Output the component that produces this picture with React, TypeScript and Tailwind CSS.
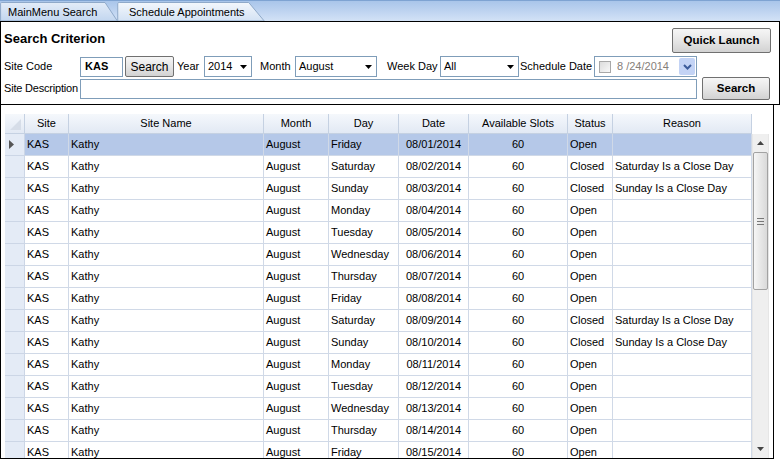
import React from "react";

interface Row {
  date: string;
  day: string;
  status: string;
  reason: string;
}

const days = ["Friday", "Saturday", "Sunday", "Monday", "Tuesday", "Wednesday", "Thursday"];

const rows: Row[] = Array.from({ length: 15 }).map((_, i) => {
  const day = days[i % 7];
  const closed = day === "Saturday" || day === "Sunday";
  return {
    date: `08/${String(i + 1).padStart(2, "0")}/2014`,
    day,
    status: closed ? "Closed" : "Open",
    reason: closed ? `${day} Is a Close Day` : "",
  };
});

const cols = [
  { key: "site", label: "Site", w: "w-[44px]", center: false },
  { key: "name", label: "Site Name", w: "w-[195px]", center: false },
  { key: "month", label: "Month", w: "w-[65px]", center: false },
  { key: "day", label: "Day", w: "w-[70px]", center: false },
  { key: "date", label: "Date", w: "w-[70px]", center: true },
  { key: "slots", label: "Available Slots", w: "w-[99px]", center: true },
  { key: "status", label: "Status", w: "w-[45px]", center: false },
  { key: "reason", label: "Reason", w: "w-[139px]", center: false },
];

function cellValue(key: string, r: Row): string {
  switch (key) {
    case "site":
      return "KAS";
    case "name":
      return "Kathy";
    case "month":
      return "August";
    case "day":
      return r.day;
    case "date":
      return r.date;
    case "slots":
      return "60";
    case "status":
      return r.status;
    default:
      return r.reason;
  }
}

function DownTri() {
  return (
    <svg width="7" height="4" viewBox="0 0 7 4" className="shrink-0">
      <path d="M0 0H7L3.5 4Z" fill="#000" />
    </svg>
  );
}

function Label({ text, cls }: { text: string; cls: string }) {
  return <span className={`shrink-0 whitespace-nowrap ${cls}`}>{text}</span>;
}

function Select({ value, w }: { value: string; w: string }) {
  return (
    <div
      className={`flex h-[21px] shrink-0 ${w} items-center justify-between border border-[#7f9db9] bg-white pl-[3px] pr-[4px]`}
    >
      <span>{value}</span>
      <DownTri />
    </div>
  );
}

function Button({ label, bold, cls }: { label: string; bold?: boolean; cls: string }) {
  return (
    <div
      className={`flex shrink-0 items-center justify-center whitespace-nowrap rounded-[2px] border border-[#707070] bg-gradient-to-b from-[#f6f6f6] via-[#e6e6e6] to-[#d2d2d2] ${
        bold ? "font-bold text-[11.5px]" : ""
      } ${cls}`}
    >
      {label}
    </div>
  );
}

function Tab({ label, selected, cls }: { label: string; selected?: boolean; cls: string }) {
  return (
    <div className={`relative h-[20px] ${cls}`}>
      <svg className="absolute inset-0 h-full w-full" preserveAspectRatio="none" viewBox="0 0 100 20">
        <defs>
          <linearGradient id={selected ? "gs" : "gu"} x1="0" y1="0" x2="0" y2="1">
            <stop offset="0" stopColor={selected ? "#f3f7fc" : "#e3ecf8"} />
            <stop offset="1" stopColor={selected ? "#d3e2f4" : "#c2d6ef"} />
          </linearGradient>
        </defs>
        <path
          d="M0.5 20V2.5Q0.5 1.5 1.5 1.5H89L99.5 20Z"
          fill={`url(#${selected ? "gs" : "gu"})`}
          stroke="#8fa9c9"
          strokeWidth="1"
          vectorEffect="non-scaling-stroke"
        />
      </svg>
      <span className="relative block pt-[4px] leading-[14px]">{label}</span>
    </div>
  );
}

export default function App() {
  return (
    <div
      className="h-[465px] w-[780px] overflow-hidden bg-white text-[11px] text-black"
      style={{ fontFamily: '"Liberation Sans", Arial, sans-serif' }}
    >
      {/* tab strip */}
      <div className="flex h-[21px] items-end border-t border-[#7ea3d2] bg-gradient-to-b from-[#a9c5ea] to-[#d3e2f6]">
        <Tab label="MainMenu Search" cls="w-[118px] pl-[8px]" />
        <Tab label="Schedule Appointments" selected cls="-ml-[1px] w-[148px] pl-[12px]" />
      </div>

      {/* search criterion panel */}
      <div className="border border-black px-[3px] pt-[6px] pb-[4px] pr-[8px]">
        <div className="flex h-[25px] items-start justify-between">
          <div className="pt-[3px] text-[13px] font-bold leading-[16px]">Search Criterion</div>
          <Button label="Quick Launch" bold cls="h-[25px] w-[99px]" />
        </div>
        <div className="mt-[3px] flex h-[21px] items-center">
          <Label text="Site Code" cls="w-[76px]" />
          <div className="flex h-[20px] w-[43px] shrink-0 items-center border border-[#7f9db9] pl-[4px] font-bold">
            KAS
          </div>
          <Button label="Search" cls="ml-[2px] h-[21px] w-[49px] text-[12px]" />
          <Label text="Year" cls="ml-[3px] w-[27px]" />
          <Select value="2014" w="w-[48px]" />
          <Label text="Month" cls="ml-[8px] w-[35px]" />
          <Select value="August" w="w-[82px]" />
          <Label text="Week Day" cls="ml-[10px] w-[53px]" />
          <Select value="All" w="w-[79px]" />
          <Label text="Schedule Date" cls="ml-[1px] w-[74px]" />
          <div className="flex h-[21px] w-[103px] shrink-0 items-center border border-[#7f9db9] bg-white pl-[4px] pr-[1px]">
            <div className="h-[12px] w-[12px] border border-[#a8a8a8] bg-gradient-to-br from-[#dcdcdc] to-[#f8f8f8]" />
            <span className="ml-[6px] text-[#86807a]">8 /24/2014</span>
            <div className="ml-auto flex h-[17px] w-[16px] items-center justify-center rounded-[2px] bg-[#c3d3f5]">
              <svg width="9" height="6" viewBox="0 0 9 6">
                <path d="M1 1L4.5 4.5L8 1" stroke="#3b5b9a" strokeWidth="2" fill="none" />
              </svg>
            </div>
          </div>
        </div>
        <div className="flex h-[23px] items-center">
          <Label text="Site Description" cls="w-[76px] tracking-[-0.2px]" />
          <div className="h-[20px] w-[617px] shrink-0 border border-[#7f9db9]" />
          <Button label="Search" bold cls="ml-[5px] h-[23px] w-[68px]" />
        </div>
      </div>

      {/* grid panel */}
      <div className="h-[354px] w-[774px] overflow-hidden border-x border-b border-black pt-[9px] pl-[4px]">
        <div className="flex h-[20px] w-[747px]">
          <div className="flex h-full w-[20px] items-end justify-end border-r border-b border-[#c5d1e2] bg-gradient-to-b from-[#f5f8fc] to-[#e2e9f4] pr-[3px] pb-[3px]">
            <svg width="11" height="11" viewBox="0 0 11 11">
              <path d="M11 0V11H0Z" fill="#d6dde8" />
            </svg>
          </div>
          {cols.map((c) => (
            <div
              key={c.key}
              className={`${c.w} flex h-full items-center justify-center border-r border-b border-[#c5d1e2] bg-gradient-to-b from-[#f5f8fc] to-[#e2e9f4]`}
            >
              {c.label}
            </div>
          ))}
        </div>
        <div className="flex h-[324px]">
          <div className="w-[747px] overflow-hidden">
            {rows.map((r, i) => (
              <div key={r.date} className={`flex h-[22px] ${i === 0 ? "bg-[#b5c8e8]" : "bg-white"}`}>
                <div className="flex h-full w-[20px] items-center border-r border-b border-[#ccd6e6] bg-[#e4ebf6] pl-[4px]">
                  {i === 0 && (
                    <svg width="5" height="9" viewBox="0 0 5 9">
                      <path d="M0 0L5 4.5L0 9Z" fill="#555" />
                    </svg>
                  )}
                </div>
                {cols.map((c) => (
                  <div
                    key={c.key}
                    className={`${c.w} flex h-full items-center overflow-hidden whitespace-nowrap border-r border-b border-[#d0d9e7] ${
                      c.center ? "justify-center" : "pl-[2px]"
                    }`}
                  >
                    {cellValue(c.key, r)}
                  </div>
                ))}
              </div>
            ))}
          </div>
          {/* scrollbar */}
          <div className="flex w-[17px] flex-col items-center border-x border-[#e6e6e6] bg-[#efefef]">
            <div className="flex h-[18px] items-center justify-center">
              <svg width="7" height="4" viewBox="0 0 7 4">
                <path d="M0 4H7L3.5 0Z" fill="#444" />
              </svg>
            </div>
            <div className="flex h-[138px] w-[15px] items-center justify-center rounded-[2px] border border-[#a2a2a2] bg-gradient-to-r from-[#f6f6f6] to-[#d9d9d9]">
              <svg width="7" height="7" viewBox="0 0 7 7">
                <path d="M0 0.5H7M0 3.5H7M0 6.5H7" stroke="#777" strokeWidth="1" />
              </svg>
            </div>
            <div className="mt-auto flex h-[18px] items-center justify-center">
              <svg width="7" height="4" viewBox="0 0 7 4">
                <path d="M0 0H7L3.5 4Z" fill="#444" />
              </svg>
            </div>
          </div>
        </div>
      </div>
    </div>
  );
}
